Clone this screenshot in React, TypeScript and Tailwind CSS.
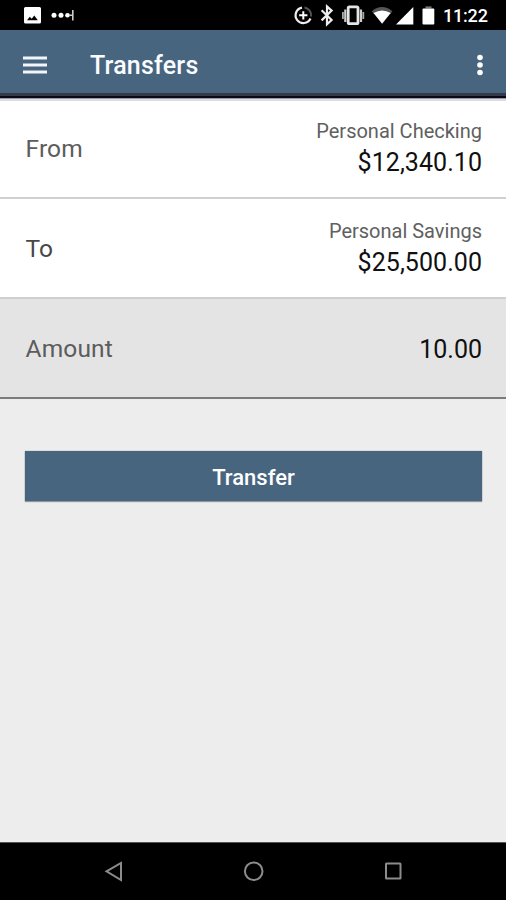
import type { ReactNode } from "react";

function StatusBar() {
  return (
    <div className="flex h-[30px] shrink-0 items-start bg-black text-white">
      <svg className="h-[30px] w-[90px]" viewBox="0 0 90 30" fill="none">
        <path
          fillRule="evenodd"
          fill="#fff"
          d="M25.500 7h14a1.500 1.500 0 0 1 1.500 1.500v13.500a1.500 1.500 0 0 1-1.500 1.500h-14a1.500 1.500 0 0 1-1.500-1.500V8.500a1.500 1.500 0 0 1 1.500-1.500Zm1.500 13.300h10.800l-3.500-4.800-2.600 3.300-1.900-2.100Z"
        />
        <circle cx="54" cy="15.300" r="2.500" fill="#fff" />
        <circle cx="61" cy="15.300" r="2.500" fill="#fff" />
        <circle cx="67.500" cy="15.300" r="2.300" fill="#fff" />
        <path d="M69 15.300h3.500M72.800 10v10.500" stroke="#ccc" strokeWidth="1.600" />
      </svg>
      <svg className="ml-auto h-[30px] w-[153px]" viewBox="290 0 153 30" fill="none">
        <path d="M302 7.600A7.800 7.800 0 1 0 310.500 18.500" stroke="#eee" strokeWidth="2.200" />
        <path d="M304.500 7.500a7.800 7.800 0 0 1 6.500 9" stroke="#555" strokeWidth="2" />
        <path d="M303.300 11.200v8.200M299.200 15.300h8.200" stroke="#fff" strokeWidth="2" />
        <path d="M321.600 10.200l10 9.800-4.600 4.200V6.400l4.600 4.200-10 9.800" stroke="#eee" strokeWidth="2.200" />
        <rect x="348.200" y="6.900" width="9.800" height="16.800" rx="1.200" stroke="#e6e6e6" strokeWidth="2.800" />
        <path d="M345.300 9.500v12.500M361 9.500v12.500" stroke="#ccc" strokeWidth="2.200" />
        <path d="M342.900 12v7M363.300 12v7" stroke="#aaa" strokeWidth="1.800" />
        <path d="M371.800 11.200q10.200-8.200 20.600 0l-2.300 3q-8-5.200-16 0Z" fill="#555" />
        <path d="M373.500 13q8.600-5 17.200 0l-8.600 10.800Z" fill="#fff" />
        <path d="M396 24.400L413.300 7v17.400Z" fill="#fff" />
        <path d="M425.500 6.400h6v2h-6Z" fill="#777" />
        <path d="M423.500 8.400h9.800a1 1 0 0 1 1 1V23.600a1 1 0 0 1-1 1h-9.800a1 1 0 0 1-1-1V9.400a1 1 0 0 1 1-1Z" fill="#fff" />
      </svg>
      <span className="w-[63px] pt-[6px] text-[18px] leading-[20px] font-medium tracking-[-0.2px] whitespace-nowrap">11:22</span>
    </div>
  );
}

function Header() {
  return (
    <header className="shrink-0 bg-[#48657f]">
      <div className="flex h-[63px] items-center pt-[7px] pr-[22px] pl-[23px]">
        <svg className="h-[18px] w-[24px]" viewBox="0 0 24 18" fill="#f2f6fb">
          <path d="M0 0.500h24v3H0ZM0 7.500h24v3H0ZM0 14.500h24v3H0Z" />
        </svg>
        <h1 className="ml-[43px] pt-[2px] text-[25px] leading-[30px] font-medium tracking-[0.2px] text-[#fafcff]">Transfers</h1>
        <svg className="ml-auto h-[22px] w-[8px]" viewBox="0 0 8 22" fill="#fff">
          <circle cx="4" cy="3.500" r="2.800" />
          <circle cx="4" cy="11" r="2.800" />
          <circle cx="4" cy="18.500" r="2.800" />
        </svg>
      </div>
      <div className="h-[3px] bg-[#343a49]" />
      <div className="h-[2px] bg-[#090a18]" />
      <div className="h-px bg-[#9a9aa4]" />
    </header>
  );
}

function Row({ label, labelClass, className, children }: { label: string; labelClass: string; className: string; children: ReactNode }) {
  return (
    <div className={`flex shrink-0 items-center justify-between pr-[24px] pl-[25.5px] ${className}`}>
      <span className={`pt-[2px] text-[24.5px] leading-[28px] tracking-[0.15px] ${labelClass}`}>{label}</span>
      <div className="flex flex-col items-end">{children}</div>
    </div>
  );
}

function Account({ name, balance }: { name: string; balance: string }) {
  return (
    <>
      <span className="text-[20px] leading-[24px] text-[#606060]">{name}</span>
      <span className="mt-[6px] text-[25px] leading-[28px] tracking-[0.05px] text-[#101010]">{balance}</span>
    </>
  );
}

export default function App() {
  return (
    <div className="flex h-[900px] w-[506px] flex-col overflow-hidden bg-[#ededed] font-[Roboto,sans-serif]">
      <StatusBar />
      <Header />
      <Row label="From" labelClass="text-[#5c5c5c]" className="h-[100px] border-t-2 border-b-2 border-t-[#dcdce2] border-b-[#d0d0d0] bg-white pb-[2px]">
        <Account name="Personal Checking" balance="$12,340.10" />
      </Row>
      <Row label="To" labelClass="text-[#484848]" className="h-[100px] border-b-2 border-[#cfcfcf] bg-white">
        <Account name="Personal Savings" balance="$25,500.00" />
      </Row>
      <Row label="Amount" labelClass="text-[#5c5c5c]" className="h-[100px] border-b-2 border-[#7c7c7c] bg-[#e4e4e4]">
        <span className="pt-[4px] text-[25px] leading-[28px] text-[#101010]">10.00</span>
      </Row>
      <button className="mt-[52px] mr-[24px] ml-[25px] h-[50px] shrink-0 bg-[#48657f] pt-[2px] text-[22px] font-medium text-white shadow-[0_0_1px_#888,0_1px_1px_#999]">
        Transfer
      </button>
      <nav className="mt-auto flex h-[58px] shrink-0 border-t border-[#555] bg-black">
        <svg className="h-[57px] w-[506px]" viewBox="0 843 506 57" fill="none" stroke="#8c8c8c" strokeWidth="2">
          <path d="M106.500 871.300L121 863v17Z" />
          <circle cx="253.700" cy="871.200" r="8.800" />
          <rect x="386" y="863.500" width="14.500" height="15" rx="0.500" />
        </svg>
      </nav>
    </div>
  );
}
